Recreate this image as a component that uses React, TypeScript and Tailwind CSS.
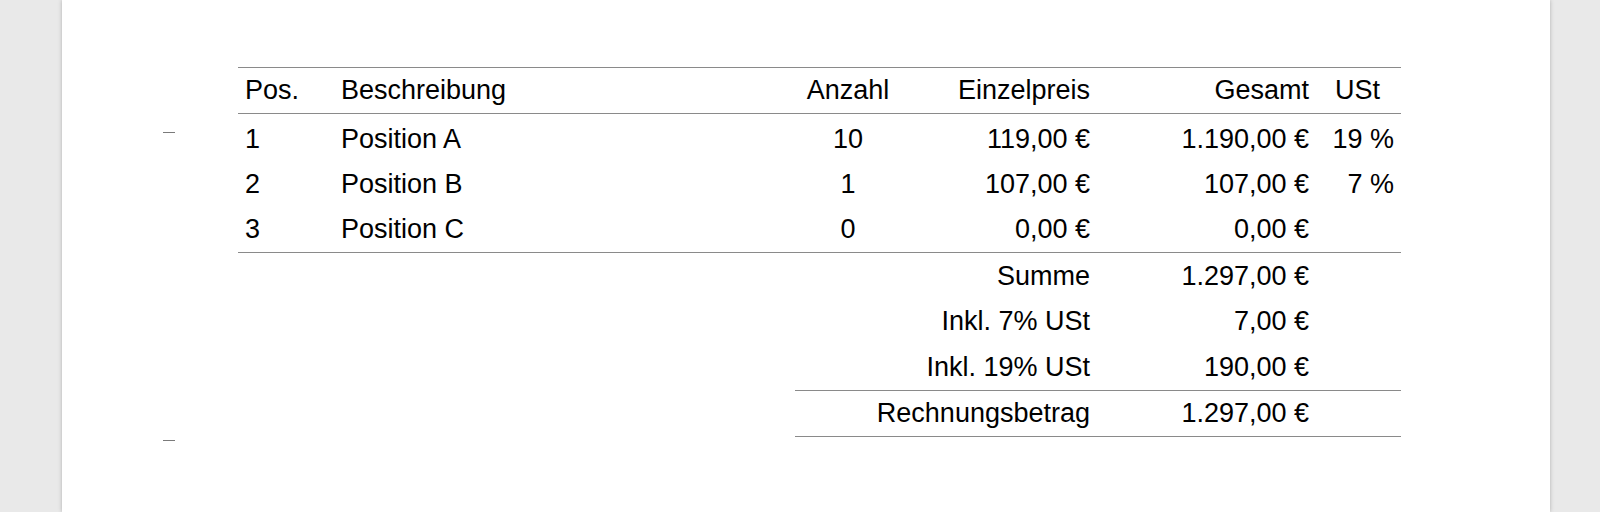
import React from "react";

const rows = [
  { pos: "1", desc: "Position A", qty: "10", unit: "119,00 €", total: "1.190,00 €", vat: "19 %" },
  { pos: "2", desc: "Position B", qty: "1", unit: "107,00 €", total: "107,00 €", vat: "7 %" },
  { pos: "3", desc: "Position C", qty: "0", unit: "0,00 €", total: "0,00 €", vat: "" },
];

const sums = [
  { label: "Summe", value: "1.297,00 €" },
  { label: "Inkl. 7% USt", value: "7,00 €" },
  { label: "Inkl. 19% USt", value: "190,00 €" },
];

export default function App() {
  return (
    <div
      className="h-[512px] w-[1600px] overflow-hidden bg-[#e9e9e9] pl-[62px] pr-[50px]"
      style={{ fontFamily: '"Liberation Sans", Arial, Helvetica, sans-serif' }}
    >
      <div className="relative h-[512px] w-[1488px] bg-white shadow-[0_0_4px_rgba(0,0,0,0.25)] pl-[176px] pt-[67px] text-[27px] text-black">
        {/* fold marks */}
        <div className="absolute left-[101px] top-[132px] h-px w-[12px] bg-[#7a7a7a]" />
        <div className="absolute left-[101px] top-[440px] h-px w-[12px] bg-[#7a7a7a]" />

        <div className="w-[1163px]">
          {/* header */}
          <div className="grid h-[47px] grid-cols-[96px_461px_106px_196px_219px_85px] items-center border-y border-[#8a8a8a] leading-none">
            <div className="pl-[7px]">Pos.</div>
            <div className="pl-[7px]">Beschreibung</div>
            <div className="text-center">Anzahl</div>
            <div className="pr-[7px] text-right">Einzelpreis</div>
            <div className="pr-[7px] text-right">Gesamt</div>
            <div className="pl-[19px]">USt</div>
          </div>

          {/* body */}
          <div className="border-b border-[#8a8a8a] pt-[3px] leading-none">
            {rows.map((r) => (
              <div
                key={r.pos}
                className="grid h-[45px] grid-cols-[96px_461px_106px_196px_219px_85px] items-center"
              >
                <div className="pl-[7px]">{r.pos}</div>
                <div className="pl-[7px]">{r.desc}</div>
                <div className="text-center">{r.qty}</div>
                <div className="pr-[7px] text-right">{r.unit}</div>
                <div className="pr-[7px] text-right">{r.total}</div>
                <div className="pr-[7px] text-right">{r.vat}</div>
              </div>
            ))}
          </div>

          {/* totals */}
          <div className="ml-[557px] w-[606px] leading-none">
            <div className="border-b border-[#8a8a8a] pt-[1px]">
              {sums.map((s) => (
                <div key={s.label} className="grid h-[45.33px] grid-cols-[302px_219px_85px] items-center">
                  <div className="pr-[7px] text-right">{s.label}</div>
                  <div className="pr-[7px] text-right">{s.value}</div>
                  <div />
                </div>
              ))}
            </div>
            <div className="grid h-[46px] grid-cols-[302px_219px_85px] items-center border-b border-[#8a8a8a]">
              <div className="pr-[7px] text-right">Rechnungsbetrag</div>
              <div className="pr-[7px] text-right">1.297,00 €</div>
              <div />
            </div>
          </div>
        </div>
      </div>
    </div>
  );
}
